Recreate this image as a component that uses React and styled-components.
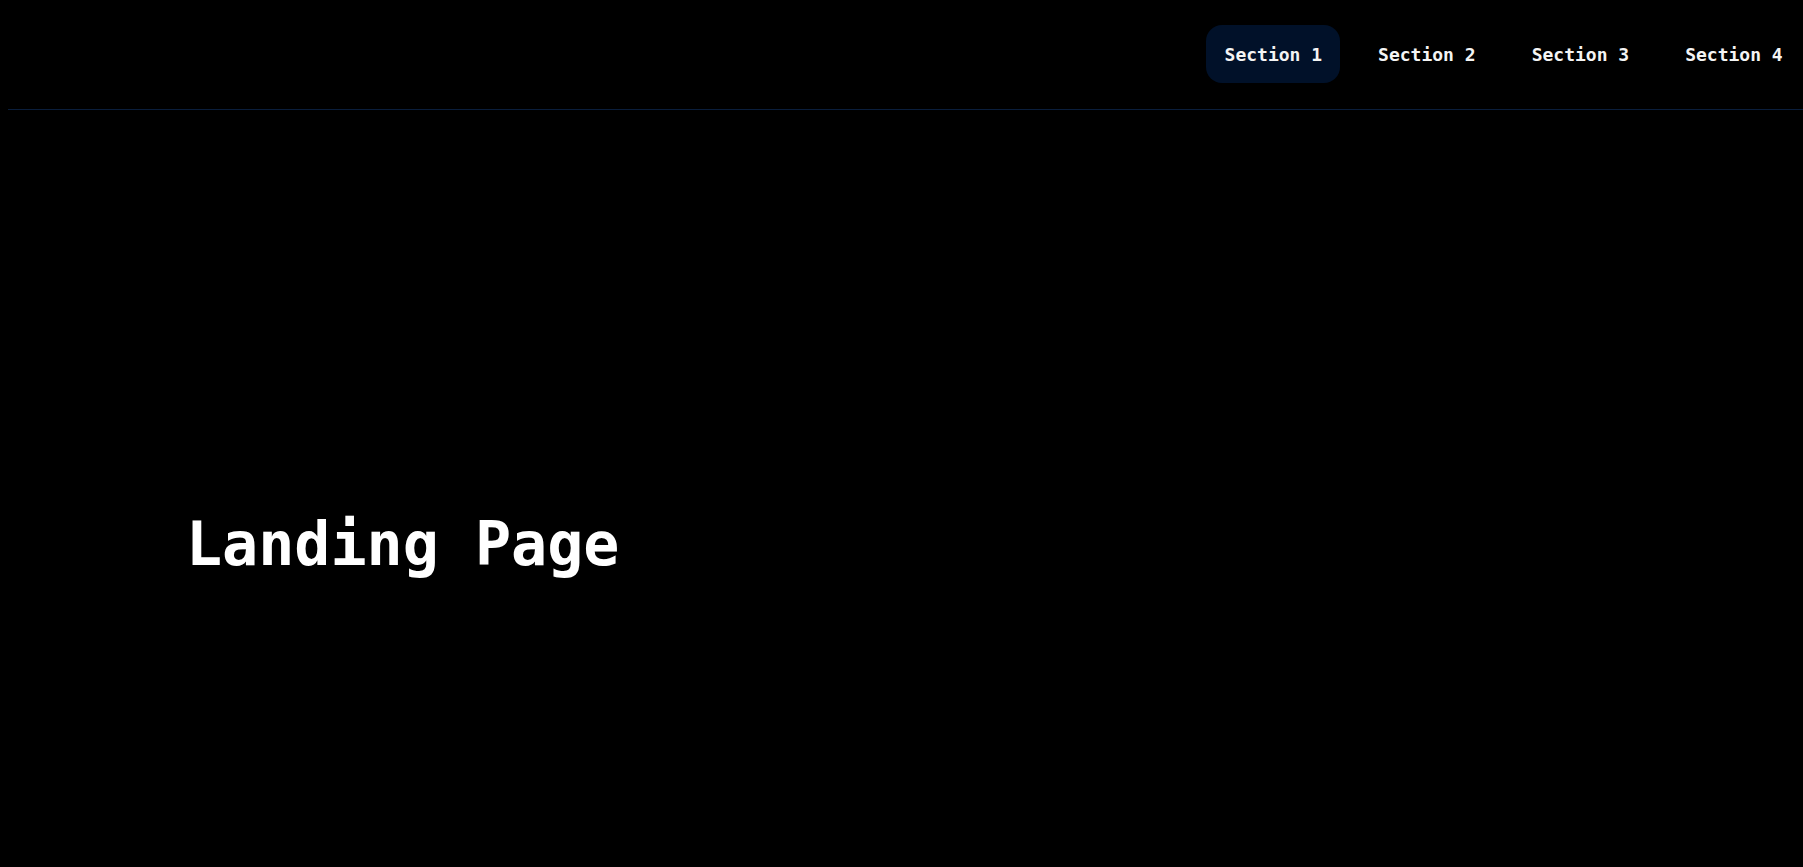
import React from 'react';
import styled, { createGlobalStyle } from 'styled-components';

const sections = ['Section 1', 'Section 2', 'Section 3', 'Section 4'];

export default function App() {
  return (
    <>
      <GlobalStyle />
      <Page>
        <Header>
          <Nav>
            {sections.map((name, i) => (
              <NavItem key={name} $active={i === 0}>
                {name}
              </NavItem>
            ))}
          </Nav>
        </Header>
        <Hero>
          <Title>Landing Page</Title>
        </Hero>
      </Page>
    </>
  );
}

const GlobalStyle = createGlobalStyle`
  html, body {
    margin: 0;
    padding: 0;
    background: #000;
    color: #fff;
    font-family: "DejaVu Sans Mono", "Liberation Mono", monospace;
    overflow-x: hidden;
  }
`;

const Page = styled.div`
  padding-left: 8px;
`;

const Header = styled.header`
  display: flex;
  justify-content: flex-end;
  padding: 25px 2px 26px 0;
  border-bottom: 1px solid #0a1e3c;
`;

const Nav = styled.nav`
  display: flex;
  gap: 19.4px;
`;

const NavItem = styled.a`
  display: flex;
  align-items: center;
  height: 58px;
  padding: 0 18.3px;
  border-radius: 16px;
  background: ${p => (p.$active ? '#011129' : 'transparent')};
  color: #f4f4f4;
  font-size: 18px;
  font-weight: bold;
  text-decoration: none;
  cursor: pointer;
`;

const Hero = styled.section`
  display: flex;
  align-items: center;
  height: 100vh;
  padding-left: 178px;
`;

const Title = styled.h1`
  margin: 0;
  font-size: 60px;
  font-weight: bold;
  line-height: normal;
`;
